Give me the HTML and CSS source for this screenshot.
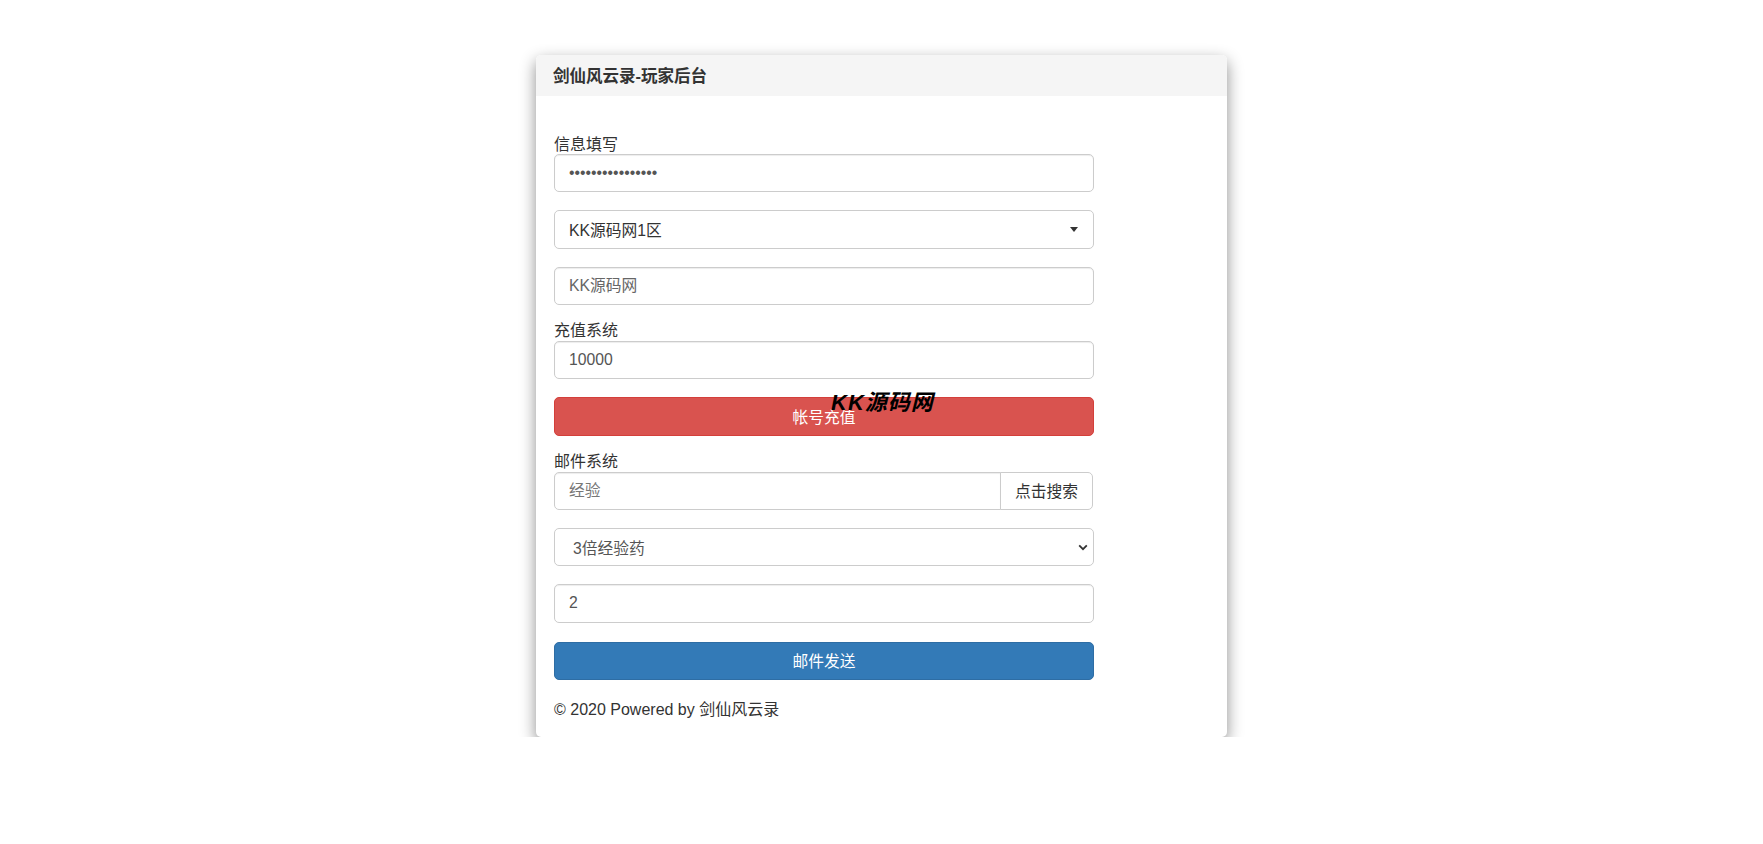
FILE: index.html
```html
<!DOCTYPE html>
<html lang="zh-CN">
<head>
<meta charset="utf-8">
<title>剑仙风云录-玩家后台</title>
<link rel="stylesheet" href="styles.css">
</head>
<body>
<div class="card">
  <div class="card-head">剑仙风云录-玩家后台</div>
  <div class="card-body">
    <form class="form">
      <label class="lbl">信息填写</label>
      <input class="ctl" type="password" value="1234567890123456">
      <div class="ctl picker gap">
        <span>KK源码网1区</span>
        <span class="caret"></span>
      </div>
      <input class="ctl gap" type="text" placeholder="KK源码网">
      <label class="lbl lbl-gap">充值系统</label>
      <input class="ctl" type="text" value="10000">
      <button type="button" class="btn btn-red gap">帐号充值</button>
      <label class="lbl lbl-gap">邮件系统</label>
      <div class="group">
        <input class="ctl group-input" type="text" placeholder="经验">
        <button type="button" class="group-btn">点击搜索</button>
      </div>
      <div class="ctl native gap">
        <span>3倍经验药</span>
        <svg class="chev" width="10" height="7" viewBox="0 0 10 7"><path d="M1.2 1.4 L5 5.2 L8.8 1.4" fill="none" stroke="#333" stroke-width="1.8"/></svg>
      </div>
      <input class="ctl gap" type="text" value="2">
      <button type="button" class="btn btn-blue gap-b">邮件发送</button>
    </form>
    <p class="foot">© 2020 Powered by 剑仙风云录</p>
  </div>
  <div class="mark">KK源码网</div>
</div>
</body>
</html>
```
FILE: styles.css
```css
html, body {
  margin: 0;
  padding: 0;
  background: #fff;
}
body {
  font-family: "Liberation Sans", Arial, "Noto Sans CJK SC", sans-serif;
  color: #333;
  font-size: 15.75px;
}
.card {
  position: relative;
  width: 691px;
  margin: 55px auto 0;
  background: #fff;
  border-radius: 5px;
  box-shadow: 0 6px 16px rgba(0, 0, 0, 0.45);
}
.card-head {
  height: 41px;
  line-height: 42px;
  padding-left: 17px;
  background: #f5f5f5;
  border-radius: 5px 5px 0 0;
  font-weight: bold;
  font-size: 16.5px;
  color: #333;
}
.card-body {
  padding: 40px 18px 16px;
}
.form {
  width: 540px;
  display: flex;
  flex-direction: column;
}
.lbl {
  display: block;
  height: 18px;
  line-height: 18px;
  font-size: 16px;
  color: #333;
}
.lbl-gap {
  margin-top: 17.25px;
  margin-bottom: 1px;
}
.ctl {
  box-sizing: border-box;
  width: 540px;
  height: 38.25px;
  flex: none;
  margin: 0;
  padding: 0 14px;
  border: 1px solid #ccc;
  border-radius: 5px;
  background: #fff;
  box-shadow: inset 0 1px 1px rgba(0, 0, 0, 0.075);
  font-family: inherit;
  font-size: 15.75px;
  color: #555;
  outline: none;
}
.ctl::placeholder {
  color: #666;
}
.gap {
  margin-top: 18px;
}
.gap-b {
  margin-top: 19px;
}
.picker {
  display: flex;
  align-items: center;
  justify-content: space-between;
  color: #333;
  padding-right: 15px;
  box-shadow: none;
}
.caret {
  width: 0;
  height: 0;
  border-left: 4.5px solid transparent;
  border-right: 4.5px solid transparent;
  border-top: 5px solid #333;
}
.native {
  display: flex;
  align-items: center;
  justify-content: space-between;
  padding-left: 18px;
  padding-right: 5px;
  box-shadow: none;
}
.chev {
  display: block;
}
.btn {
  box-sizing: border-box;
  width: 540px;
  height: 38.25px;
  flex: none;
  border: 1px solid transparent;
  border-radius: 5px;
  font-family: inherit;
  font-size: 15.75px;
  color: #fff;
  padding: 0;
  cursor: pointer;
}
.btn-red {
  background: #d9534f;
  border-color: #d43f3a;
}
.btn-blue {
  background: #337ab7;
  border-color: #2e6da4;
}
.group {
  display: flex;
  width: 539px;
  height: 38.25px;
}
.group-input {
  flex: 1;
  width: auto;
  border-radius: 5px 0 0 5px;
}
.group-input::placeholder {
  color: #777;
}
.group-btn {
  box-sizing: border-box;
  width: 93px;
  height: 38.25px;
  margin-left: -1px;
  border: 1px solid #ccc;
  border-radius: 0 5px 5px 0;
  background: #fff;
  font-family: inherit;
  font-size: 15.75px;
  color: #333;
  padding: 0;
}
.foot {
  margin: 19px 0 0;
  height: 22px;
  line-height: 22px;
  font-size: 16px;
  color: #333;
}
.mark {
  position: absolute;
  left: 295px;
  top: 335px;
  font-size: 22px;
  font-weight: bold;
  font-style: italic;
  letter-spacing: 1px;
  color: #000;
  line-height: 26px;
}
```
